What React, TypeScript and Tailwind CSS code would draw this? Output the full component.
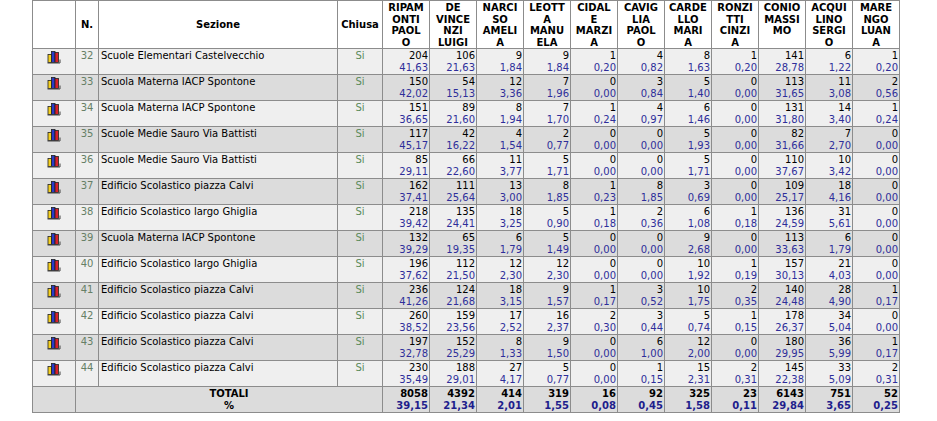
import React from "react";

const headers: string[][] = [
  ["RIPAM", "ONTI", "PAOL", "O"],
  ["DE", "VINCE", "NZI", "LUIGI"],
  ["NARCI", "SO", "AMELI", "A"],
  ["LEOTT", "A", "MANU", "ELA"],
  ["CIDAL", "E", "MARZI", "A"],
  ["CAVIG", "LIA", "PAOL", "O"],
  ["CARDE", "LLO", "MARI", "A"],
  ["RONZI", "TTI", "CINZI", "A"],
  ["CONIO", "MASSI", "MO"],
  ["ACQUI", "LINO", "SERGI", "O"],
  ["MARE", "NGO", "LUAN", "A"],
];

type Row = { n: number; sezione: string; values: [number, string][] };

const rows: Row[] = [
  { n: 32, sezione: "Scuole Elementari Castelvecchio", values: [[204, "41,63"], [106, "21,63"], [9, "1,84"], [9, "1,84"], [1, "0,20"], [4, "0,82"], [8, "1,63"], [1, "0,20"], [141, "28,78"], [6, "1,22"], [1, "0,20"]] },
  { n: 33, sezione: "Scuola Materna IACP Spontone", values: [[150, "42,02"], [54, "15,13"], [12, "3,36"], [7, "1,96"], [0, "0,00"], [3, "0,84"], [5, "1,40"], [0, "0,00"], [113, "31,65"], [11, "3,08"], [2, "0,56"]] },
  { n: 34, sezione: "Scuola Materna IACP Spontone", values: [[151, "36,65"], [89, "21,60"], [8, "1,94"], [7, "1,70"], [1, "0,24"], [4, "0,97"], [6, "1,46"], [0, "0,00"], [131, "31,80"], [14, "3,40"], [1, "0,24"]] },
  { n: 35, sezione: "Scuole Medie Sauro Via Battisti", values: [[117, "45,17"], [42, "16,22"], [4, "1,54"], [2, "0,77"], [0, "0,00"], [0, "0,00"], [5, "1,93"], [0, "0,00"], [82, "31,66"], [7, "2,70"], [0, "0,00"]] },
  { n: 36, sezione: "Scuole Medie Sauro Via Battisti", values: [[85, "29,11"], [66, "22,60"], [11, "3,77"], [5, "1,71"], [0, "0,00"], [0, "0,00"], [5, "1,71"], [0, "0,00"], [110, "37,67"], [10, "3,42"], [0, "0,00"]] },
  { n: 37, sezione: "Edificio Scolastico piazza Calvi", values: [[162, "37,41"], [111, "25,64"], [13, "3,00"], [8, "1,85"], [1, "0,23"], [8, "1,85"], [3, "0,69"], [0, "0,00"], [109, "25,17"], [18, "4,16"], [0, "0,00"]] },
  { n: 38, sezione: "Edificio Scolastico largo Ghiglia", values: [[218, "39,42"], [135, "24,41"], [18, "3,25"], [5, "0,90"], [1, "0,18"], [2, "0,36"], [6, "1,08"], [1, "0,18"], [136, "24,59"], [31, "5,61"], [0, "0,00"]] },
  { n: 39, sezione: "Scuola Materna IACP Spontone", values: [[132, "39,29"], [65, "19,35"], [6, "1,79"], [5, "1,49"], [0, "0,00"], [0, "0,00"], [9, "2,68"], [0, "0,00"], [113, "33,63"], [6, "1,79"], [0, "0,00"]] },
  { n: 40, sezione: "Edificio Scolastico largo Ghiglia", values: [[196, "37,62"], [112, "21,50"], [12, "2,30"], [12, "2,30"], [0, "0,00"], [0, "0,00"], [10, "1,92"], [1, "0,19"], [157, "30,13"], [21, "4,03"], [0, "0,00"]] },
  { n: 41, sezione: "Edificio Scolastico piazza Calvi", values: [[236, "41,26"], [124, "21,68"], [18, "3,15"], [9, "1,57"], [1, "0,17"], [3, "0,52"], [10, "1,75"], [2, "0,35"], [140, "24,48"], [28, "4,90"], [1, "0,17"]] },
  { n: 42, sezione: "Edificio Scolastico piazza Calvi", values: [[260, "38,52"], [159, "23,56"], [17, "2,52"], [16, "2,37"], [2, "0,30"], [3, "0,44"], [5, "0,74"], [1, "0,15"], [178, "26,37"], [34, "5,04"], [0, "0,00"]] },
  { n: 43, sezione: "Edificio Scolastico piazza Calvi", values: [[197, "32,78"], [152, "25,29"], [8, "1,33"], [9, "1,50"], [0, "0,00"], [6, "1,00"], [12, "2,00"], [0, "0,00"], [180, "29,95"], [36, "5,99"], [1, "0,17"]] },
  { n: 44, sezione: "Edificio Scolastico piazza Calvi", values: [[230, "35,49"], [188, "29,01"], [27, "4,17"], [5, "0,77"], [0, "0,00"], [1, "0,15"], [15, "2,31"], [2, "0,31"], [145, "22,38"], [33, "5,09"], [2, "0,31"]] },
];

const totals: [number, string][] = [
  [8058, "39,15"], [4392, "21,34"], [414, "2,01"], [319, "1,55"], [16, "0,08"], [92, "0,45"],
  [325, "1,58"], [23, "0,11"], [6143, "29,84"], [751, "3,65"], [52, "0,25"],
];

const ChartIcon = () => (
  <svg width="14" height="14" viewBox="0 0 14 14" className="inline-block">
    <rect x="1" y="4.5" width="3.5" height="8" fill="#f5d020" stroke="#222" strokeWidth="0.8" />
    <rect x="4.5" y="1.5" width="3.5" height="11" fill="#2a3cc8" stroke="#222" strokeWidth="0.8" />
    <rect x="8" y="2.5" width="3.5" height="10" fill="#d8202a" stroke="#222" strokeWidth="0.8" />
    <path d="M0.5 13 H13 V9.5" fill="none" stroke="#444" strokeWidth="1" />
  </svg>
);

const cell = "border border-[#8c8c8c] align-top";

export default function App() {
  return (
    <div className="bg-white w-[937px] h-[421px] overflow-hidden font-['DejaVu_Sans',Verdana,sans-serif] text-[10px] text-black">
      <table className="ml-[32px] border-collapse border border-[#808080] table-fixed w-[868px] leading-[12px]">
        <colgroup>
          <col className="w-[43px]" />
          <col className="w-[23px]" />
          <col className="w-[239px]" />
          <col className="w-[45px]" />
          {headers.map((_, i) => (
            <col key={i} className="w-[47px]" />
          ))}
        </colgroup>
        <thead>
          <tr className="bg-white">
            <th className="border border-[#8c8c8c]"></th>
            <th className="border border-[#8c8c8c] font-bold">N.</th>
            <th className="border border-[#8c8c8c] font-bold">Sezione</th>
            <th className="border border-[#8c8c8c] font-bold">Chiusa</th>
            {headers.map((h, i) => (
              <th key={i} className="border border-[#8c8c8c] font-bold text-center align-top px-0 pt-[1px] leading-[11.5px]">
                {h.map((line, j) => (
                  <div key={j}>{line}</div>
                ))}
              </th>
            ))}
          </tr>
        </thead>
        <tbody>
          {rows.map((r, idx) => (
            <tr key={r.n} className={idx % 2 === 0 ? "bg-[#efefef]" : "bg-[#dcdcdc]"}>
              <td className={`${cell} text-center pt-[1px]`}>
                <ChartIcon />
              </td>
              <td className={`${cell} text-center text-[#667f66] pt-[1px]`}>{r.n}</td>
              <td className={`${cell} pl-[2px] pt-[1px]`}>{r.sezione}</td>
              <td className={`${cell} text-center text-[#5a8a5a] pt-[1px]`}>Si</td>
              {r.values.map(([v, p], i) => (
                <td key={i} className={`${cell} text-right pr-[1px] pt-[1px] h-[26px]`}>
                  <div>{v}</div>
                  <div className="text-[#2e2e9a]">{p}</div>
                </td>
              ))}
            </tr>
          ))}
          <tr className="bg-[#dcdcdc] font-bold">
            <td className={cell}></td>
            <td colSpan={3} className={`${cell} text-center pt-[1px]`}>
              <div>TOTALI</div>
              <div>%</div>
            </td>
            {totals.map(([v, p], i) => (
              <td key={i} className={`${cell} text-right pr-[1px] pt-[1px] h-[26px]`}>
                <div>{v}</div>
                <div className="text-[#1e1e8c]">{p}</div>
              </td>
            ))}
          </tr>
        </tbody>
      </table>
    </div>
  );
}
